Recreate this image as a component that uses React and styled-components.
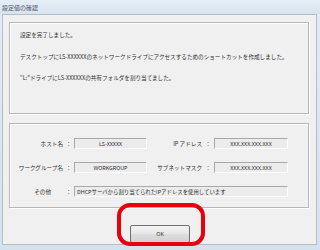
import React from "react";
import styled, { createGlobalStyle } from "styled-components";

const GlobalStyle = createGlobalStyle`
  html, body {
    margin: 0;
    padding: 0;
    background: #dfe8f2;
  }
  body {
    font-family: "Noto Sans CJK JP", "Noto Sans", sans-serif;
  }
`;

const rows = [
  { left: "ホスト名", leftValue: "LS-XXXXX", right: "IP アドレス", rightValue: "XXX.XXX.XXX.XXX" },
  { left: "ワークグループ名", leftValue: "WORKGROUP", right: "サブネットマスク", rightValue: "XXX.XXX.XXX.XXX" },
];

const App = () => {
  return (
    <>
      <GlobalStyle />
      <Window>
        <TitleBar>設定値の確認</TitleBar>
        <Client>
          <Panel $height={92}>
            <Message>設定を完了しました。</Message>
            <Message>
              デスクトップにLS-XXXXXXのネットワークドライブにアクセスするためのショートカットを作成しました。
            </Message>
            <Message>“L:”ドライブにLS-XXXXXXの共有フォルダを割り当てました。</Message>
          </Panel>

          <Panel $height={85}>
            <InfoGrid>
              {rows.map((r) => (
                <React.Fragment key={r.left}>
                  <Label>{r.left}</Label>
                  <Colon>：</Colon>
                  <Field>{r.leftValue}</Field>
                  <Label>{r.right}</Label>
                  <Colon>：</Colon>
                  <Field>{r.rightValue}</Field>
                </React.Fragment>
              ))}
              <Label $inset>その他</Label>
              <Colon>：</Colon>
              <Field $wide>DHCPサーバから割り当てられたIPアドレスを使用しています</Field>
            </InfoGrid>
          </Panel>

          <Footer>
            <ButtonWrap>
              <OkButton>OK</OkButton>
              <Highlight />
            </ButtonWrap>
          </Footer>
        </Client>
      </Window>
    </>
  );
};

const Window = styled.div`
  width: 320px;
  height: 250px;
  display: flex;
  flex-direction: column;
  background: linear-gradient(#e3ebf5, #d6e1ee);
  overflow: hidden;
`;

const TitleBar = styled.div`
  height: 14px;
  padding-left: 2px;
  display: flex;
  align-items: center;
  font-size: 6px;
  color: #4e5664;
  background: linear-gradient(#e6eef7, #d9e3ef);
`;

const Client = styled.div`
  margin: 0 3px 5px 2px;
  flex: 1;
  background: #f0f0f0;
  border: 1px solid #b4bcc6;
  display: flex;
  flex-direction: column;
  padding: 7px 7px 0 6px;
  gap: 9px;
`;

const Panel = styled.div`
  height: ${({ $height }) => $height}px;
  box-sizing: border-box;
  border: 1px solid #b7b7b7;
  box-shadow: inset 1px 1px 0 #ffffff, 1px 1px 0 #ffffff;
  padding: 8px 10px 0;
  display: flex;
  flex-direction: column;
  gap: 13.5px;
`;

const Message = styled.div`
  font-size: 5.6px;
  line-height: 8px;
  color: #2e2e2e;
  white-space: nowrap;
`;

const InfoGrid = styled.div`
  display: grid;
  grid-template-columns: 53px 11px 73px 55px 12px 74px;
  grid-auto-rows: 11px;
  row-gap: 13px;
  margin: 6px 0 0 -10px;
  align-items: center;
`;

const Label = styled.div`
  font-size: 5.6px;
  color: #2e2e2e;
  text-align: right;
  white-space: nowrap;
  padding-right: ${({ $inset }) => ($inset ? 12 : 0)}px;
`;

const Colon = styled.div`
  font-size: 5.6px;
  color: #2e2e2e;
  text-align: center;
`;

const Field = styled.div`
  height: 11px;
  box-sizing: border-box;
  grid-column: ${({ $wide }) => ($wide ? "span 4" : "auto")};
  border-top: 1px solid #a8a8a8;
  border-left: 1px solid #a8a8a8;
  border-bottom: 1px solid #ffffff;
  border-right: 1px solid #ffffff;
  background: #ececec;
  font-size: 5.4px;
  color: #2e2e2e;
  display: flex;
  align-items: center;
  justify-content: ${({ $wide }) => ($wide ? "flex-start" : "center")};
  padding-left: ${({ $wide }) => ($wide ? 2 : 0)}px;
  white-space: nowrap;
`;

const Footer = styled.div`
  display: flex;
  justify-content: center;
`;

const ButtonWrap = styled.div`
  position: relative;
  margin-left: 2px;
`;

const OkButton = styled.button`
  width: 60px;
  height: 18px;
  box-sizing: border-box;
  border: 1px solid #707070;
  border-radius: 2px;
  background: linear-gradient(#f4f4f4, #e6e6e6 50%, #dcdcdc 51%, #d2d2d2);
  font-family: "Noto Sans", sans-serif;
  font-size: 5.5px;
  color: #333;
  padding: 0;
`;

const Highlight = styled.div`
  position: absolute;
  left: -13px;
  top: -14px;
  width: 88px;
  height: 43px;
  box-sizing: border-box;
  border: 4px solid #e8000f;
  border-radius: 13px;
`;

export default App;
